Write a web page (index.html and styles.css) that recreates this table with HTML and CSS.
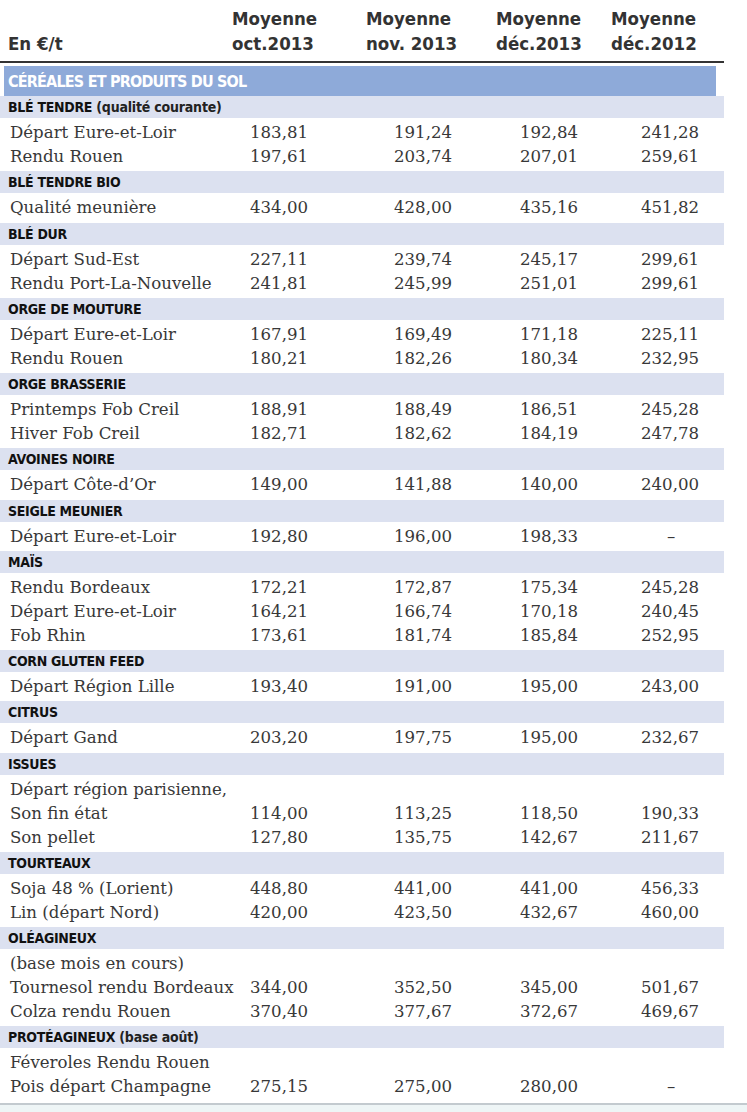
FILE: index.html
```html
<!DOCTYPE html>
<html lang="fr">
<head>
<meta charset="utf-8">
<title>Prix des céréales</title>
<link rel="stylesheet" href="styles.css">
</head>
<body>
<div class="sheet">
  <div class="head">
    <div class="h-unit">En €/t</div>
    <div class="h-col">Moyenne<br>oct.2013</div>
    <div class="h-col">Moyenne<br>nov. 2013</div>
    <div class="h-col">Moyenne<br>déc.2013</div>
    <div class="h-col">Moyenne<br>déc.2012</div>
  </div>

  <div class="section">CÉRÉALES ET PRODUITS DU SOL</div>

  <div class="group">
    <div class="cat"><span class="cat-main">BLÉ TENDRE</span> (qualité courante)</div>
    <div class="rows">
      <div class="row"><span>Départ Eure-et-Loir</span><span>183,81</span><span>191,24</span><span>192,84</span><span>241,28</span></div>
      <div class="row"><span>Rendu Rouen</span><span>197,61</span><span>203,74</span><span>207,01</span><span>259,61</span></div>
    </div>
  </div>

  <div class="group">
    <div class="cat"><span class="cat-main">BLÉ TENDRE BIO</span></div>
    <div class="rows">
      <div class="row"><span>Qualité meunière</span><span>434,00</span><span>428,00</span><span>435,16</span><span>451,82</span></div>
    </div>
  </div>

  <div class="group">
    <div class="cat"><span class="cat-main">BLÉ DUR</span></div>
    <div class="rows">
      <div class="row"><span>Départ Sud-Est</span><span>227,11</span><span>239,74</span><span>245,17</span><span>299,61</span></div>
      <div class="row"><span>Rendu Port-La-Nouvelle</span><span>241,81</span><span>245,99</span><span>251,01</span><span>299,61</span></div>
    </div>
  </div>

  <div class="group">
    <div class="cat"><span class="cat-main">ORGE DE MOUTURE</span></div>
    <div class="rows">
      <div class="row"><span>Départ Eure-et-Loir</span><span>167,91</span><span>169,49</span><span>171,18</span><span>225,11</span></div>
      <div class="row"><span>Rendu Rouen</span><span>180,21</span><span>182,26</span><span>180,34</span><span>232,95</span></div>
    </div>
  </div>

  <div class="group">
    <div class="cat"><span class="cat-main">ORGE BRASSERIE</span></div>
    <div class="rows">
      <div class="row"><span>Printemps Fob Creil</span><span>188,91</span><span>188,49</span><span>186,51</span><span>245,28</span></div>
      <div class="row"><span>Hiver Fob Creil</span><span>182,71</span><span>182,62</span><span>184,19</span><span>247,78</span></div>
    </div>
  </div>

  <div class="group">
    <div class="cat"><span class="cat-main">AVOINES NOIRE</span></div>
    <div class="rows">
      <div class="row"><span>Départ Côte-d’Or</span><span>149,00</span><span>141,88</span><span>140,00</span><span>240,00</span></div>
    </div>
  </div>

  <div class="group">
    <div class="cat"><span class="cat-main">SEIGLE MEUNIER</span></div>
    <div class="rows">
      <div class="row"><span>Départ Eure-et-Loir</span><span>192,80</span><span>196,00</span><span>198,33</span><span class="dash">–</span></div>
    </div>
  </div>

  <div class="group">
    <div class="cat"><span class="cat-main">MAÏS</span></div>
    <div class="rows">
      <div class="row"><span>Rendu Bordeaux</span><span>172,21</span><span>172,87</span><span>175,34</span><span>245,28</span></div>
      <div class="row"><span>Départ Eure-et-Loir</span><span>164,21</span><span>166,74</span><span>170,18</span><span>240,45</span></div>
      <div class="row"><span>Fob Rhin</span><span>173,61</span><span>181,74</span><span>185,84</span><span>252,95</span></div>
    </div>
  </div>

  <div class="group">
    <div class="cat"><span class="cat-main">CORN GLUTEN FEED</span></div>
    <div class="rows">
      <div class="row"><span>Départ Région Lille</span><span>193,40</span><span>191,00</span><span>195,00</span><span>243,00</span></div>
    </div>
  </div>

  <div class="group">
    <div class="cat"><span class="cat-main">CITRUS</span></div>
    <div class="rows">
      <div class="row"><span>Départ Gand</span><span>203,20</span><span>197,75</span><span>195,00</span><span>232,67</span></div>
    </div>
  </div>

  <div class="group">
    <div class="cat"><span class="cat-main">ISSUES</span></div>
    <div class="rows">
      <div class="row"><span>Départ région parisienne,</span><span></span><span></span><span></span><span></span></div>
      <div class="row"><span>Son fin état</span><span>114,00</span><span>113,25</span><span>118,50</span><span>190,33</span></div>
      <div class="row"><span>Son pellet</span><span>127,80</span><span>135,75</span><span>142,67</span><span>211,67</span></div>
    </div>
  </div>

  <div class="group">
    <div class="cat"><span class="cat-main">TOURTEAUX</span></div>
    <div class="rows">
      <div class="row"><span>Soja 48 % (Lorient)</span><span>448,80</span><span>441,00</span><span>441,00</span><span>456,33</span></div>
      <div class="row"><span>Lin (départ Nord)</span><span>420,00</span><span>423,50</span><span>432,67</span><span>460,00</span></div>
    </div>
  </div>

  <div class="group">
    <div class="cat"><span class="cat-main">OLÉAGINEUX</span></div>
    <div class="rows">
      <div class="row"><span>(base mois en cours)</span><span></span><span></span><span></span><span></span></div>
      <div class="row"><span>Tournesol rendu Bordeaux</span><span>344,00</span><span>352,50</span><span>345,00</span><span>501,67</span></div>
      <div class="row"><span>Colza rendu Rouen</span><span>370,40</span><span>377,67</span><span>372,67</span><span>469,67</span></div>
    </div>
  </div>

  <div class="group">
    <div class="cat"><span class="cat-main">PROTÉAGINEUX</span> (base août)</div>
    <div class="rows">
      <div class="row"><span>Féveroles Rendu Rouen</span><span></span><span></span><span></span><span></span></div>
      <div class="row"><span>Pois départ Champagne</span><span>275,15</span><span>275,00</span><span>280,00</span><span class="dash">–</span></div>
    </div>
  </div>

  <div class="foot"></div>
</div>
</body>
</html>
```

FILE: styles.css
```css
html, body {
  margin: 0;
  padding: 0;
  background: #ffffff;
}

.sheet {
  width: 747px;
  color: #3a3a3a;
}

.head {
  width: 716px;
  display: grid;
  grid-template-columns: 224px 134px 130px 115px 1fr;
  padding: 6px 0 5px 8px;
  border-bottom: 2px solid #333333;
  font-family: "DejaVu Sans Condensed", "DejaVu Sans", sans-serif;
  font-weight: bold;
  font-size: 18.5px;
  line-height: 25px;
  color: #333333;
  align-items: end;
}

.section {
  margin: 3px 0 0 4px;
  width: 712px;
  height: 30px;
  box-sizing: border-box;
  padding-left: 4px;
  background: #8eaad9;
  color: #ffffff;
  font-family: "DejaVu Sans Condensed", "DejaVu Sans", sans-serif;
  font-weight: bold;
  font-size: 16px;
  letter-spacing: -0.8px;
  line-height: 32px;
}

.group {
  width: 724px;
}

.cat {
  height: 22px;
  line-height: 23px;
  padding-left: 8px;
  background: #dce1f0;
  color: #222222;
  font-family: "DejaVu Sans Condensed", "DejaVu Sans", sans-serif;
  font-weight: bold;
  font-size: 14px;
  letter-spacing: -0.2px;
}

.cat-main {
  color: #111111;
  letter-spacing: -0.3px;
}

.rows {
  padding: 3px 0 2.25px 0;
}

.row {
  display: grid;
  grid-template-columns: 240px 144px 126px 121px 1fr;
  padding-left: 10px;
  height: 24px;
  line-height: 24px;
  font-family: "DejaVu Serif", "Liberation Serif", serif;
  font-size: 16.6px;
  color: #383838;
  white-space: nowrap;
}

.dash {
  padding-left: 26px;
}

.foot {
  margin-top: 1px;
  height: 7px;
  border-top: 2px solid #c3cacf;
  background: #eef5f6;
}
```
